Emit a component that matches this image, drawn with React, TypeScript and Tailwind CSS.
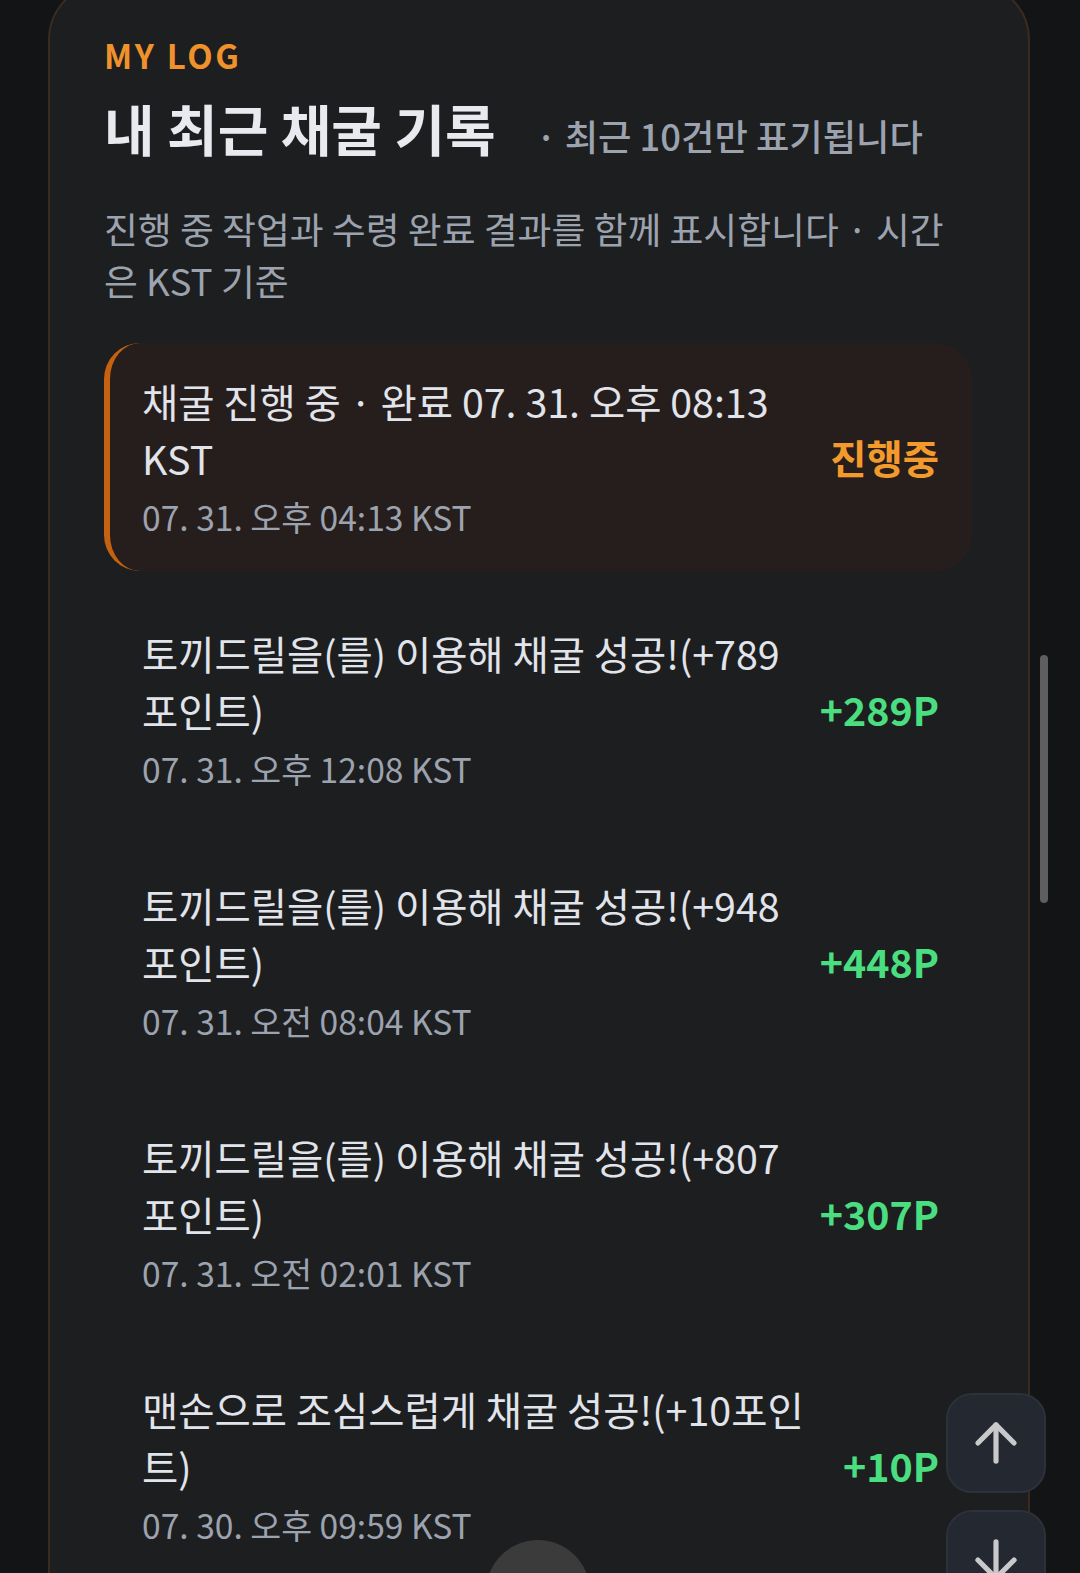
import React from "react";
import { ArrowUp, ArrowDown } from "lucide-react";

type Row = {
  title: string;
  date: string;
  value: string;
  active?: boolean;
};

const rows: Row[] = [
  {
    title: "채굴 진행 중 · 완료 07. 31. 오후 08:13 KST",
    date: "07. 31. 오후 04:13 KST",
    value: "진행중",
    active: true,
  },
  {
    title: "토끼드릴을(를) 이용해 채굴 성공!(+789 포인트)",
    date: "07. 31. 오후 12:08 KST",
    value: "+289P",
  },
  {
    title: "토끼드릴을(를) 이용해 채굴 성공!(+948 포인트)",
    date: "07. 31. 오전 08:04 KST",
    value: "+448P",
  },
  {
    title: "토끼드릴을(를) 이용해 채굴 성공!(+807 포인트)",
    date: "07. 31. 오전 02:01 KST",
    value: "+307P",
  },
  {
    title: "맨손으로 조심스럽게 채굴 성공!(+10포인트)",
    date: "07. 30. 오후 09:59 KST",
    value: "+10P",
  },
];

function LogRow({ row }: { row: Row }) {
  return (
    <div
      className={
        row.active
          ? "flex items-center gap-6 rounded-[36px] border-l-[6px] border-[#c4620f] bg-[#261e1c] pb-[30px] pl-[32px] pr-[33px] pt-[29px]"
          : "flex items-center gap-6 rounded-[36px] border-l-[6px] border-transparent pb-[30px] pl-[32px] pr-[33px] pt-[29px]"
      }
    >
      <div className="min-w-0 flex-1">
        <div className="text-[39.4px] leading-[57px] text-[#e1e4ea]">{row.title}</div>
        <div className="mt-[7px] text-[33.6px] leading-[48px] text-[#9ca3af]">{row.date}</div>
      </div>
      <div
        className={
          row.active
            ? "shrink-0 text-[39.4px] font-bold text-[#f39a2c]"
            : "shrink-0 text-[39.4px] font-bold text-[#4ade80]"
        }
      >
        {row.value}
      </div>
    </div>
  );
}

export default function App() {
  return (
    <div className="relative h-[1573px] overflow-hidden bg-[#131416] font-['Noto_Sans_CJK_KR','Noto_Sans',sans-serif]">
      <div className="mx-[48px] mt-[-18px] w-[982px] rounded-[58px] border-2 border-[#3a2b20] bg-[#1d1e20] pb-[80px] pl-[54px] pr-[56px] pt-[49px]">
        <div className="text-[33px] font-bold leading-[44px] tracking-[0.08em] text-[#f0922c]">MY LOG</div>
        <div className="mt-[14px] flex items-baseline gap-[40px]">
          <h1 className="text-[55px] font-bold leading-[72px] text-[#e8eaf0]">내 최근 채굴 기록</h1>
          <span className="text-[36.3px] font-medium text-[#9ca3af]">· 최근 10건만 표기됩니다</span>
        </div>
        <p className="mt-[39px] text-[36.8px] leading-[52px] text-[#9ca3af]">
          진행 중 작업과 수령 완료 결과를 함께 표시합니다 · 시간은 KST 기준
        </p>
        <div className="mt-[37px] flex flex-col gap-[24px]">
          {rows.map((r, i) => (
            <LogRow key={i} row={r} />
          ))}
        </div>
      </div>

      {/* overlay scrollbar */}
      <div className="absolute left-[1040px] top-[655px] h-[248px] w-[8px] rounded-full bg-[#5e5e60]" />

      {/* floating scroll buttons */}
      <button className="absolute left-[946px] top-[1393px] flex h-[100px] w-[100px] items-center justify-center rounded-[26px] border-2 border-[#2c313a] bg-[#232831] text-[#c9c9cc]">
        <ArrowUp size={62} strokeWidth={2} />
      </button>
      <button className="absolute left-[946px] top-[1510px] flex h-[100px] w-[100px] items-center justify-center rounded-[26px] border-2 border-[#2c313a] bg-[#232831] text-[#c9c9cc]">
        <ArrowDown size={62} strokeWidth={2} />
      </button>

      {/* bottom floating circle */}
      <div className="absolute left-[486px] top-[1540px] h-[104px] w-[104px] rounded-full bg-[#3b3b3c]" />
    </div>
  );
}
